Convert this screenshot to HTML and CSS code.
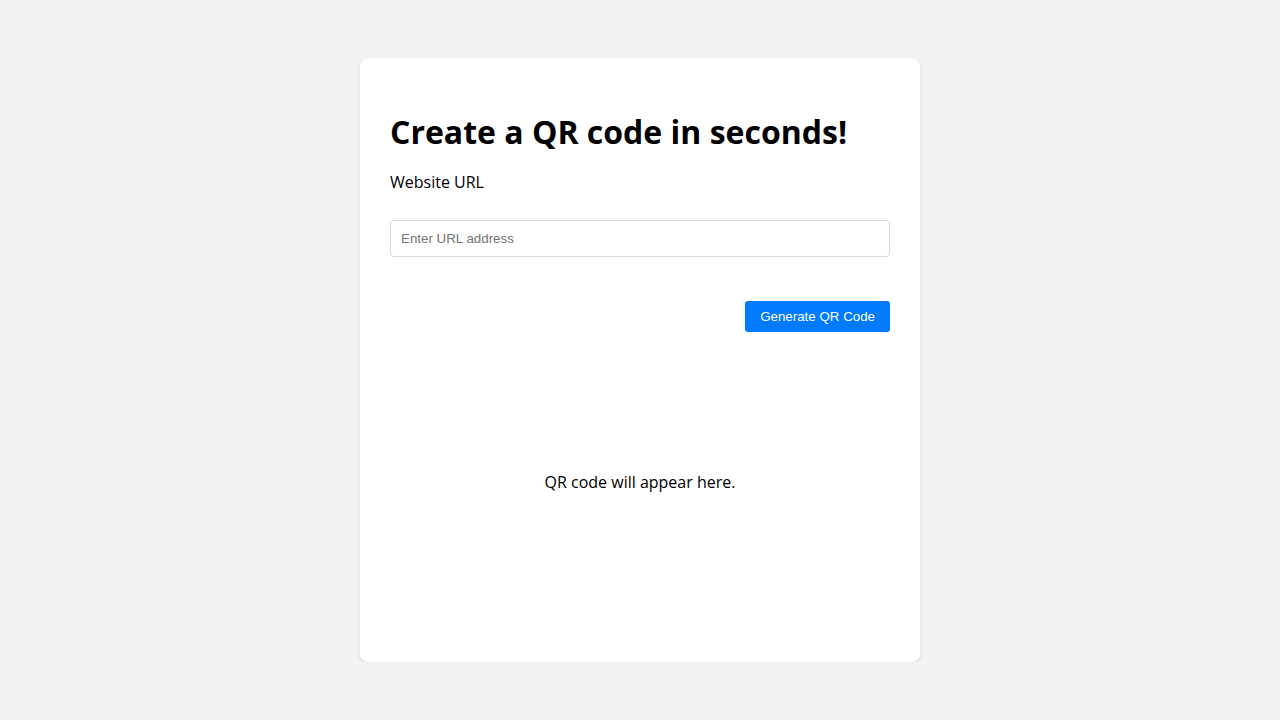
FILE: index.html
```html
<!DOCTYPE html>
<html lang="en">
<head>
<meta charset="utf-8">
<title>QR Code Generator</title>
<link rel="stylesheet" href="styles.css">
</head>
<body>
<main class="card">
  <h1 class="title">Create a QR code in seconds!</h1>
  <label class="label" for="url">Website URL</label>
  <input class="input" id="url" type="text" placeholder="Enter URL address">
  <div class="actions">
    <button class="btn" type="button">Generate QR Code</button>
  </div>
  <div class="qr-area">
    <p class="qr-text">QR code will appear here.</p>
  </div>
</main>
</body>
</html>
```
FILE: styles.css
```css
html, body {
  margin: 0;
  padding: 0;
}
body {
  background: #f3f3f3;
  font-family: "Open Sans", "Noto Sans", sans-serif;
  font-size: 16px;
  color: #000;
  display: flex;
  justify-content: center;
  padding-top: 58px;
}
.card {
  width: 560px;
  box-sizing: border-box;
  background: #fff;
  border-radius: 8px;
  box-shadow: 0 2px 5px rgba(0, 0, 0, 0.1);
  padding: 30px;
  display: flex;
  flex-direction: column;
}
.title {
  font-size: 32px;
  font-weight: 700;
  margin: 22px 0 17px;
  line-height: 1.36;
}
.label {
  display: block;
  line-height: 22px;
  margin-bottom: 27px;
}
.input {
  box-sizing: border-box;
  width: 100%;
  height: 37px;
  padding: 0 10px;
  border: 1px solid #d9d9d9;
  border-radius: 4px;
  font-family: "Liberation Sans", Arial, sans-serif;
  font-size: 13.33px;
  color: #000;
  outline: none;
}
.input::placeholder {
  color: #757575;
}
.actions {
  display: flex;
  justify-content: flex-end;
  margin-top: 44px;
}
.btn {
  background: #007bff;
  color: #fff;
  border: none;
  border-radius: 3px;
  height: 31px;
  padding: 0 15px;
  font-family: "Liberation Sans", Arial, sans-serif;
  font-size: 13.33px;
  cursor: pointer;
}
.qr-area {
  height: 300px;
  display: flex;
  align-items: center;
  justify-content: center;
}
.qr-text {
  margin: 0;
  font-size: 16px;
  line-height: 22px;
}
```
